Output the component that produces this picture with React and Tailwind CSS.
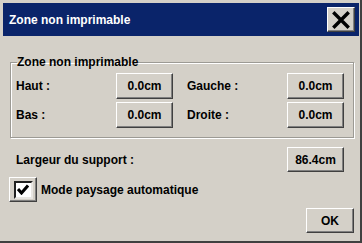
import React, { useState } from 'react';

const Btn = ({ children, className = '' }) => (
  <button
    type="button"
    className={`flex items-center justify-center bg-[#d4d0c8] border border-t-white border-l-white border-r-[#404040] border-b-[#404040] shadow-[inset_-1px_-1px_0_#808080] text-black text-[12px] font-bold ${className}`}
  >
    {children}
  </button>
);

const Row = ({ label1, value1, label2, value2 }) => (
  <div className="flex items-center h-[26px]">
    <span className="w-[100px]">{label1}</span>
    <Btn className="w-[57px] h-[26px]">{value1}</Btn>
    <span className="w-[100px] ml-[14px]">{label2}</span>
    <Btn className="w-[57px] h-[26px]">{value2}</Btn>
  </div>
);

const App = () => {
  const [landscape, setLandscape] = useState(true);

  return (
    <div className="w-[362px] h-[243px] bg-[#d4d0c8] pt-[3px] pl-[3px] pr-[2px] border-r-2 border-b-2 border-r-[#404040] border-b-[#404040] font-['Liberation_Sans',Arial,sans-serif] text-[12px] font-bold text-black flex flex-col overflow-hidden">
      {/* Title bar */}
      <div className="h-[33px] w-[356px] bg-[#0a246a] flex items-center justify-between pl-[6px] pr-[4px]">
        <span className="text-white text-[12px] font-bold">Zone non imprimable</span>
        <Btn className="w-[28px] h-[25px]">
          <svg width="18" height="18" viewBox="0 0 18 18">
            <path d="M2.5 2.5 L15.5 15.5 M15.5 2.5 L2.5 15.5" stroke="#000" strokeWidth="3.4" strokeLinecap="square" />
          </svg>
        </Btn>
      </div>

      {/* Group box */}
      <fieldset className="ml-[7px] mt-[19px] w-[344px] border border-[#9c9a94] shadow-[inset_1px_1px_0_#fff,1px_1px_0_#fff] pl-[5px] pb-[9px]">
        <legend className="ml-[1px] px-0 leading-[14px] font-bold">Zone non imprimable</legend>
        <div className="flex flex-col gap-[3px] pt-[4px]">
          <Row label1="Haut :" value1="0.0cm" label2="Gauche :" value2="0.0cm" />
          <Row label1="Bas :" value1="0.0cm" label2="Droite :" value2="0.0cm" />
        </div>
      </fieldset>

      {/* Support width */}
      <div className="flex items-center h-[25px] mt-[9px] pl-[13px]">
        <span className="w-[271px]">Largeur du support :</span>
        <Btn className="w-[57px] h-[25px]">86.4cm</Btn>
      </div>

      {/* Checkbox */}
      <div className="flex items-center mt-[5px] pl-[6px] gap-[4px]">
        <button
          type="button"
          onClick={() => setLandscape(!landscape)}
          className="w-[28px] h-[25px] flex items-center justify-center bg-[#d4d0c8] border border-t-white border-l-white border-r-[#404040] border-b-[#404040] shadow-[inset_-1px_-1px_0_#808080]"
        >
          <span className="w-[19px] h-[18px] bg-white border-2 border-t-[#202020] border-l-[#202020] border-r-[#e8e6e2] border-b-[#e8e6e2] flex items-center justify-center">
            {landscape && (
              <svg width="12" height="11" viewBox="0 0 12 11">
                <path d="M1 5 L4.5 9 L11 1.5" stroke="#000" strokeWidth="3" fill="none" />
              </svg>
            )}
          </span>
        </button>
        <span>Mode paysage automatique</span>
      </div>

      {/* Footer */}
      <div className="flex justify-end mt-[6px] pr-[4px]">
        <Btn className="w-[48px] h-[25px]">OK</Btn>
      </div>
    </div>
  );
};

export default App;
